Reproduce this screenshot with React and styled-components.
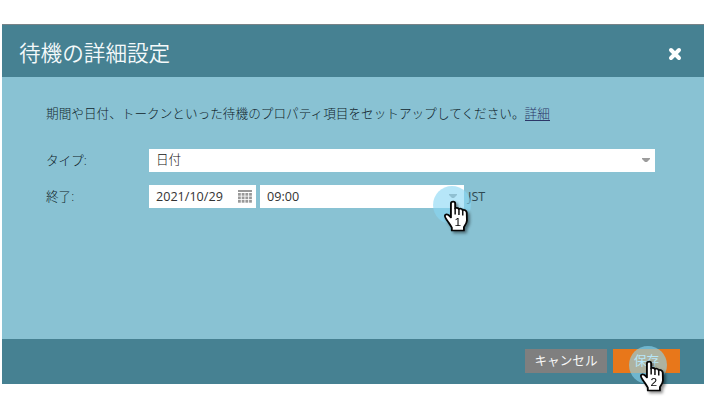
import React from "react";
import styled, { createGlobalStyle } from "styled-components";

const GlobalStyle = createGlobalStyle`
  * { box-sizing: border-box; }
  body {
    margin: 0;
    background: #fff;
    font-family: "Open Sans", "Noto Sans CJK JP", sans-serif;
    font-size: 12.6px;
    color: #10242b;
  }
`;

const Page = styled.main`
  height: 405px;
  padding: 24px 3px 21px 2px;
  overflow: hidden;
`;

const Dialog = styled.section`
  display: flex;
  flex-direction: column;
  width: 702px;
  height: 360px;
  background: #89c2d3;
`;

const Header = styled.header`
  display: flex;
  align-items: center;
  justify-content: space-between;
  height: 53px;
  flex: none;
  padding: 5px 22px 0 17px;
  border-top: 1px solid #788388;
  background: #468192;
`;

const Title = styled.h1`
  margin: 0 0 3px;
  font-family: "Noto Sans CJK JP", sans-serif;
  font-size: 21.6px;
  line-height: 32px;
  font-weight: 350;
  color: #f4f9fa;
  white-space: nowrap;
`;

const CloseButton = styled.button`
  display: flex;
  padding: 0;
  border: 0;
  background: none;
`;

const Body = styled.div`
  flex: 1;
  padding: 26px 49px 0 44px;
`;

const Description = styled.p`
  margin: 0;
  height: 46px;
  line-height: 19px;
  font-family: "Noto Sans CJK JP", sans-serif;
  font-weight: 300;
  letter-spacing: 0.04px;
  white-space: nowrap;
`;

const DetailsLink = styled.a`
  color: #2c3768;
  border-bottom: 1px solid #2c3768;
  display: inline-block;
  line-height: 15px;
`;

const FormRow = styled.div`
  display: flex;
  align-items: center;
  height: 23px;
  margin-bottom: 13px;
`;

const Label = styled.label`
  flex: none;
  width: 103px;
  padding-bottom: 2px;
  font-weight: 300;
`;

const Field = styled.div`
  display: flex;
  flex: none;
  align-items: center;
  justify-content: space-between;
  width: ${(p) => p.$width}px;
  height: 23px;
  margin-right: 4px;
  padding: 0 ${(p) => p.$end}px 0 7px;
  background: #fff;
  color: #333;
`;

const Value = styled.span`
  height: 23px;
  line-height: ${(p) => (p.$light ? 21 : 24)}px;
  font-weight: ${(p) => (p.$light ? 300 : 400)};
  color: ${(p) => (p.$light ? "#111" : "#333")};
`;

const Zone = styled.span`
  color: #2e4952;
`;

const Footer = styled.footer`
  display: flex;
  justify-content: flex-end;
  gap: 6px;
  height: 45px;
  flex: none;
  padding: 10px 24px 0 0;
  background: #468192;
`;

const Button = styled.button`
  width: ${(p) => p.$width}px;
  height: 24px;
  padding: 0 0 2px;
  border: 0;
  background: ${(p) => (p.$primary ? "#e8771a" : "#7f7f7f")};
  color: ${(p) => (p.$primary ? "#fff" : "#f8f8f8")};
  font-family: "Noto Sans CJK JP", sans-serif;
  font-size: 12.6px;
  line-height: 20px;
`;

const Marker = styled.div`
  position: absolute;
  left: ${(p) => p.$x}px;
  top: ${(p) => p.$y}px;
  width: 38px;
  height: 38px;
  border-radius: 50%;
  background: rgba(137, 215, 243, 0.62);
  pointer-events: none;
`;

const HandSvg = styled.svg`
  position: absolute;
  left: 10.5px;
  top: 14px;
  overflow: visible;
  filter: drop-shadow(2px 2px 1.5px rgba(0, 0, 0, 0.45));
`;

const ArrowSvg = styled.svg`
  margin-bottom: 2px;
`;

const Arrow = () => (
  <ArrowSvg width="8" height="4" viewBox="0 0 8 4">
    <path d="M0 0H8V1L5 4H3L0 1Z" fill="#9c9c9c" />
  </ArrowSvg>
);

const Calendar = () => (
  <svg width="14" height="13" viewBox="0 0 14 13" fill="#999">
    <path d="M0 0H14V2H0Z" />
    {[3, 6.5, 10].map((y) =>
      [0, 3.7, 7.4, 11.1].map((x) => (
        <rect key={x + "-" + y} x={x} y={y} width="2.8" height="2.7" />
      ))
    )}
  </svg>
);

function PointerStep({ x, y, step }) {
  return (
    <Marker $x={x} $y={y}>
      <HandSvg width="26" height="32" viewBox="0 0 24 32" preserveAspectRatio="none">
        <path
          d="M8.5 1.6C9.8 1.6 10.3 2.3 10.3 3.4V8.6C10.8 7.5 13.2 7.7 13.7 9.2C14.6 8.3 16.8 8.6 17.2 10.3C18.5 9.4 20.8 10.3 21 12.6L21.2 20.5C21.2 23 19.4 25.5 18.4 27V30.5H7.2V27.6C5.8 25 4.2 22.6 2.9 20.4C1.3 18.1.1 16 1.2 14.9C2.6 13.6 4.6 15 6.4 17.4V3.4C6.4 2.3 7.2 1.6 8.5 1.6Z"
          fill="#fff"
          stroke="#050505"
          strokeWidth="1.7"
          strokeLinejoin="round"
        />
        <path d="M10.3 8V14.5M13.8 9.2V15M17.3 10.4V15.5" stroke="#111" strokeWidth="1.4" fill="none" />
        <text x="12.7" y="26" textAnchor="middle" fontFamily="Liberation Sans, sans-serif" fontSize="11" fill="#000">
          {step}
        </text>
      </HandSvg>
    </Marker>
  );
}

export default function App() {
  return (
    <Page>
      <GlobalStyle />
      <Dialog>
        <Header>
          <Title>待機の詳細設定</Title>
          <CloseButton aria-label="閉じる">
            <svg width="14" height="14" viewBox="0 0 14 14">
              <path d="M3 3L11 11M11 3L3 11" stroke="#fff" strokeWidth="4" strokeLinecap="round" />
            </svg>
          </CloseButton>
        </Header>
        <Body>
          <Description>
            期間や日付、トークンといった待機のプロパティ項目をセットアップしてください。<DetailsLink>詳細</DetailsLink>
          </Description>
          <FormRow>
            <Label>タイプ:</Label>
            <Field $width={506} $end={5}>
              <Value $light>日付</Value>
              <Arrow />
            </Field>
          </FormRow>
          <FormRow>
            <Label>終了:</Label>
            <Field $width={107} $end={4}>
              <Value>2021/10/29</Value>
              <Calendar />
            </Field>
            <Field $width={204} $end={7}>
              <Value>09:00</Value>
              <Arrow />
            </Field>
            <Zone>JST</Zone>
          </FormRow>
        </Body>
        <Footer>
          <Button $width={82}>キャンセル</Button>
          <Button $width={67} $primary>保存</Button>
        </Footer>
      </Dialog>
      <PointerStep x={433} y={186} step={1} />
      <PointerStep x={629} y={346} step={2} />
    </Page>
  );
}
